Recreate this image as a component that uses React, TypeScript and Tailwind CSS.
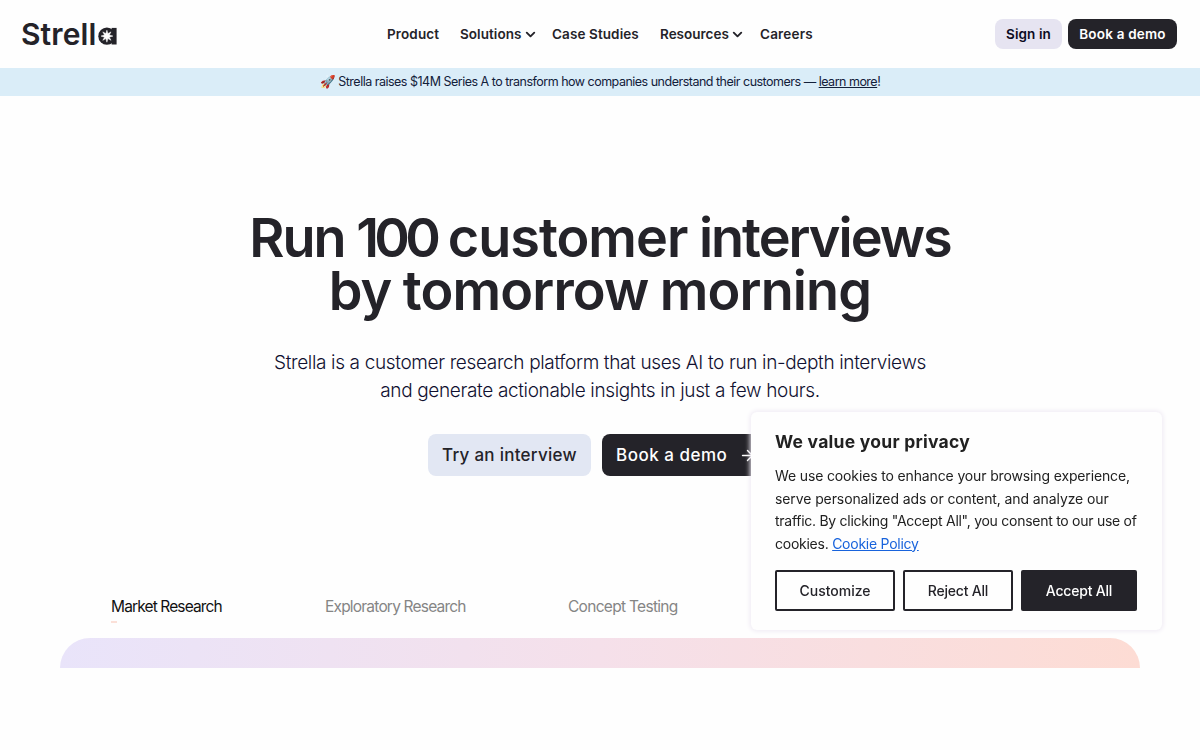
import { useState } from 'react'
import { ArrowRight, ChevronDown } from 'lucide-react'

const navItems = [
  { label: 'Product', menu: false, className: 'w-[73px] tracking-[0.12px]' },
  { label: 'Solutions', menu: true, className: 'w-[92px] tracking-[0.06px]' },
  { label: 'Case Studies', menu: false, className: 'w-[108px] tracking-[0.1px]' },
  { label: 'Resources', menu: true, className: 'w-[100px]' },
  { label: 'Careers', menu: false, className: 'w-[54px] tracking-[0.2px]' },
]

const tabs = [
  { label: 'Market Research', className: 'w-[214px] tracking-[-0.87px]' },
  { label: 'Exploratory Research', className: 'w-[243px] tracking-[-0.8px]' },
  { label: 'Concept Testing', className: 'w-[220px] tracking-[-0.7px]' },
]

function Logo() {
  return (
    <a href="#" aria-label="Strella" className="flex items-baseline text-[#242329]">
      <span className="text-[30px] leading-9 font-semibold tracking-[0.1px]">Strell</span>
      <svg width="19" height="18" viewBox="0 0 19 18" className="ml-0.5">
        <path d="M13.6.9H18.6v16.6h-5z" fill="currentColor" />
        <circle cx="8.9" cy="9.2" r="8.6" fill="currentColor" />
        {/* eight-pointed spark */}
        <path
          d="M8.9 3.2l1 3.4 3.1-1.7-1.7 3.1 3.6 1.1-3.6 1.1 1.7 3.1-3.1-1.7-1 3.6-1-3.6-3.1 1.7 1.7-3.1-3.5-1.1 3.5-1.1-1.7-3.1 3.1 1.7z"
          fill="#fff"
          stroke="#fff"
          strokeWidth="0.5"
        />
      </svg>
    </a>
  )
}

function Header() {
  return (
    <header className="flex h-[68px] items-center">
      <div className="flex w-[387px] items-center pl-[21px]">
        <Logo />
      </div>
      <nav className="flex flex-1 items-center text-[13.5px] leading-5 font-semibold text-[#242329]">
        {navItems.map((item) => (
          <a key={item.label} href="#" className={`flex items-center gap-px whitespace-nowrap ${item.className}`}>
            {item.label}
            {item.menu && <ChevronDown size={15} strokeWidth={3} className="shrink-0" />}
          </a>
        ))}
      </nav>
      <div className="flex gap-1.5 pr-[23px] text-[13.5px] font-semibold">
        <button className="h-[30px] w-[67px] rounded-lg bg-[#e6e4f1] tracking-[0.1px] text-[#0b0b22]">Sign in</button>
        <button className="h-[30px] w-[109px] rounded-lg bg-[#242329] tracking-[0.2px] whitespace-nowrap text-white">Book a demo</button>
      </div>
    </header>
  )
}

function CookieDialog({ onClose }: { onClose: () => void }) {
  return (
    <div className="fixed top-[412px] left-[751px] h-[218px] w-[411px] rounded-md bg-[#fefefe] px-6 shadow-[0_0_5px_1px_#eee9f3]">
      <h2 className="pt-[17px] text-[17.5px] leading-[26px] font-bold tracking-[0.25px] text-[#212121]">We value your privacy</h2>
      <p className="mt-[10px] text-[14px] leading-[22.5px] whitespace-nowrap text-[#212121]">
        <span className="block tracking-[-0.14px]">We use cookies to enhance your browsing experience,</span>
        <span className="block tracking-[-0.1px]">serve personalized ads or content, and analyze our</span>
        <span className="block tracking-[-0.27px]">traffic. By clicking "Accept All", you consent to our use of</span>
        <span className="block tracking-[-0.25px]">
          cookies.{' '}
          <a href="#" className="text-[#1863dc] underline">Cookie Policy</a>
        </span>
      </p>
      <div className="mt-[15px] flex gap-2 text-[14px] font-medium">
        <button onClick={onClose} className="h-[41px] w-[120px] rounded-xs border-2 border-[#242329] text-[#242329]">Customize</button>
        <button onClick={onClose} className="h-[41px] w-[110px] rounded-xs border-2 border-[#242329] tracking-[-0.2px] text-[#242329]">Reject All</button>
        <button onClick={onClose} className="h-[41px] w-[116px] rounded-xs bg-[#242329] tracking-[-0.2px] text-white">Accept All</button>
      </div>
    </div>
  )
}

export default function App() {
  const [activeTab, setActiveTab] = useState(0)
  const [showCookies, setShowCookies] = useState(true)

  return (
    <div className="h-[750px] overflow-hidden bg-[#fefefe] font-[Inter,sans-serif]">
      <Header />

      {/* Announcement */}
      <div className="flex h-7 items-center justify-center bg-[#daedf8] text-[12.5px] tracking-[-0.5px] whitespace-pre text-[#12203a]">
        <span>🚀 Strella raises $14M Series A to transform how companies understand their customers — </span>
        <a href="#" className="underline">learn more</a>!
      </div>

      {/* Hero */}
      <main className="flex flex-col items-center text-center">
        <h1 className="mt-[116px] text-[54px] leading-[52.5px] font-semibold whitespace-nowrap text-[#242329]">
          <span className="block tracking-[-2px]">
            Run <span className="tracking-[-4.7px]">100</span> <span className="tracking-[-1px]">customer</span> interviews
          </span>
          <span className="block tracking-[-0.85px] [word-spacing:-1.5px]">by tomorrow morning</span>
        </h1>
        <p className="mt-[32px] text-[19px] leading-7 font-light tracking-[-0.35px] whitespace-nowrap text-[#101030]">
          <span className="block">Strella is a customer research platform that uses AI to run in-depth interviews</span>
          <span className="block">and generate actionable insights in just a few hours.</span>
        </p>
        <div className="mt-[29px] flex w-[344px] gap-[11px] text-[17px] font-medium">
          <button className="h-[42px] w-[163px] shrink-0 rounded-lg bg-[#e2e7f3] pt-px tracking-[0.27px] text-[#242329]">Try an interview</button>
          <button className="flex h-[42px] w-[170px] shrink-0 items-center justify-between rounded-lg bg-[#242329] pt-px pr-[16px] pl-[14px] tracking-[0.5px] text-white">
            Book a demo
            <ArrowRight size={17} strokeWidth={2} />
          </button>
        </div>
      </main>

      {/* Use cases */}
      <section className="mt-[119px] px-[60px]">
        <div className="flex h-[43px] pl-[51px] text-[15.5px] leading-6">
          {tabs.map((tab, i) => (
            <button
              key={tab.label}
              onClick={() => setActiveTab(i)}
              className={`flex flex-col items-start whitespace-nowrap ${tab.className} ${activeTab === i ? 'text-[#111111]' : 'text-[#858585]'}`}
            >
              {tab.label}
              {activeTab === i && <span className="mt-[2px] h-0.5 w-[6px] bg-[#fbe0d8]" />}
            </button>
          ))}
        </div>
        <div className="h-[30px] rounded-t-[30px] bg-linear-to-r from-[#e9e4fa] via-[#f5e0ea] to-[#fddcd4]" />
      </section>

      {showCookies && <CookieDialog onClose={() => setShowCookies(false)} />}
    </div>
  )
}
